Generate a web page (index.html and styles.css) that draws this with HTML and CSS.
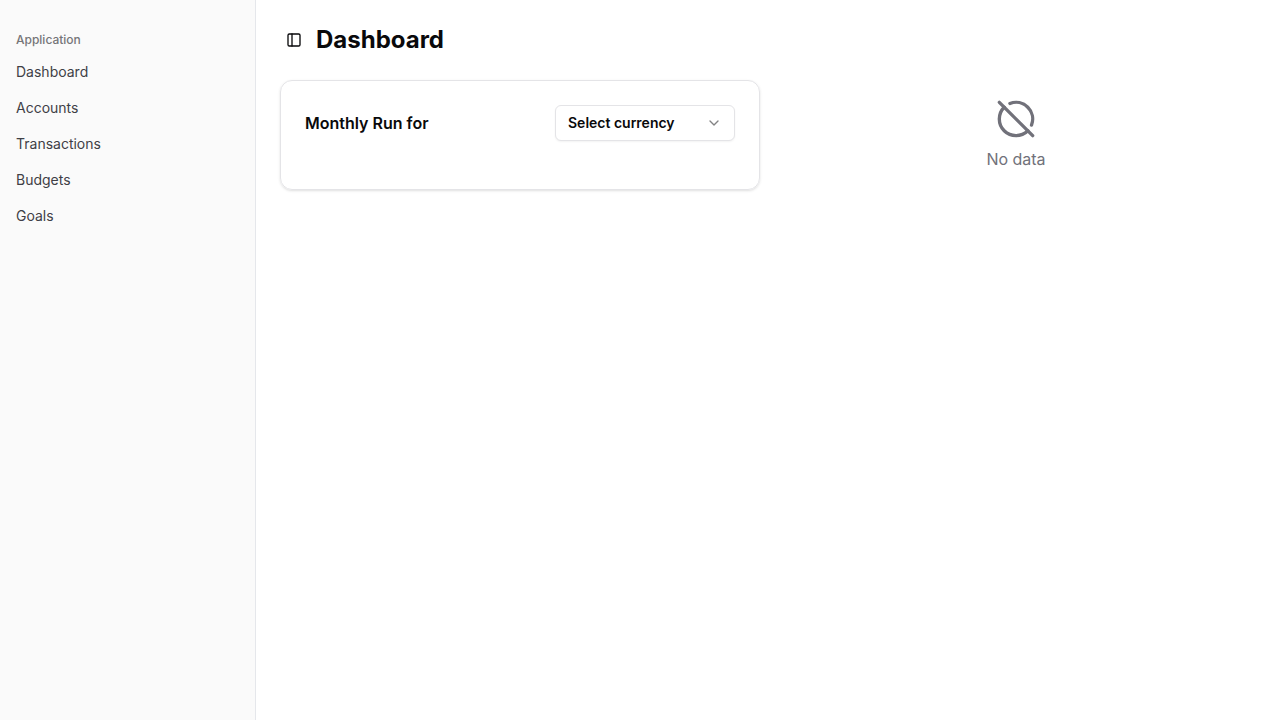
FILE: index.html
```html
<!DOCTYPE html>
<html lang="en">
<head>
<meta charset="utf-8">
<meta name="viewport" content="width=device-width, initial-scale=1">
<title>Dashboard</title>
<link rel="stylesheet" href="styles.css">
</head>
<body>
<div class="layout">
  <aside class="sidebar">
    <div class="sidebar-label" id="nav-label">Application</div>
    <nav class="nav" aria-labelledby="nav-label">
      <a class="nav-link" href="#dashboard">Dashboard</a>
      <a class="nav-link" href="#accounts">Accounts</a>
      <a class="nav-link" href="#transactions">Transactions</a>
      <a class="nav-link" href="#budgets">Budgets</a>
      <a class="nav-link" href="#goals">Goals</a>
    </nav>
  </aside>
  <main class="main">
    <header class="header">
      <button class="toggle" type="button" aria-label="Toggle sidebar">
        <svg width="16" height="16" viewBox="0 0 24 24" fill="none" stroke="currentColor" stroke-width="2" stroke-linecap="round" stroke-linejoin="round"><rect width="18" height="18" x="3" y="3" rx="2"/><path d="M9 3v18"/></svg>
      </button>
      <h1 class="title">Dashboard</h1>
    </header>
    <div class="grid">
      <section class="card">
        <label class="card-title" for="currency">Monthly Run for</label>
        <div class="select-wrap">
          <select class="select" id="currency"><option>Select currency</option></select>
          <svg class="chevron" width="16" height="16" viewBox="0 0 24 24" fill="none" stroke="currentColor" stroke-width="2" stroke-linecap="round" stroke-linejoin="round"><path d="m6 9 6 6 6-6"/></svg>
        </div>
      </section>
      <section class="empty">
        <svg width="40" height="40" viewBox="0 0 24 24" fill="none" stroke="currentColor" stroke-width="2" stroke-linecap="round" stroke-linejoin="round"><path d="m2 2 20 20"/><path d="M8.35 2.69A10 10 0 0 1 21.3 15.65"/><path d="M19.08 19.08A10 10 0 1 1 4.92 4.92"/></svg>
        <p class="empty-text">No data</p>
      </section>
    </div>
  </main>
</div>
</body>
</html>
```
FILE: styles.css
```css
* { box-sizing: border-box; }
body {
  margin: 0;
  font-family: Inter, "Liberation Sans", sans-serif;
  font-size: 16px;
  line-height: 24px;
  color: #09090b;
  background: #fff;
}
svg { display: block; flex-shrink: 0; }
.layout { display: flex; min-height: 100vh; }
.sidebar {
  flex: 0 0 256px;
  padding: 24px 8px;
  background: #fafafa;
  border-right: 1px solid #e5e7eb;
}
.sidebar-label {
  padding: 8px;
  font-size: 12px;
  font-weight: 500;
  line-height: 16px;
  color: #757578;
}
.nav { display: flex; flex-direction: column; gap: 4px; }
.nav-link {
  padding: 6px 8px;
  font-size: 14px;
  line-height: 20px;
  color: #3f3f46;
  text-decoration: none;
}
.main { flex: 1; min-width: 0; padding: 24px; }
.header { display: flex; align-items: center; gap: 8px; margin-bottom: 24px; }
.toggle {
  display: flex;
  align-items: center;
  justify-content: center;
  width: 28px;
  height: 28px;
  padding: 0;
  border: 0;
  border-radius: 6px;
  color: inherit;
  background: transparent;
}
.title { margin: 0; font-size: 24px; font-weight: 700; line-height: 32px; }
.grid { display: grid; grid-template-columns: 1fr 1fr; gap: 16px; }
.card {
  display: flex;
  align-items: center;
  justify-content: space-between;
  padding: 24px 24px 48px;
  border: 1px solid #e4e4e7;
  border-radius: 12px;
  box-shadow: 0 1px 3px rgba(0, 0, 0, 0.1), 0 1px 2px -1px rgba(0, 0, 0, 0.1);
}
.card-title { font-weight: 600; }
.select-wrap { position: relative; width: 180px; }
.select {
  display: block;
  width: 100%;
  height: 36px;
  padding: 0 36px 0 12px;
  border: 1px solid #e4e4e7;
  border-radius: 6px;
  appearance: none;
  font: 600 14px/20px Inter, "Liberation Sans", sans-serif;
  color: #09090b;
  background: #fff;
  box-shadow: 0 1px 2px rgba(0, 0, 0, 0.05);
}
.chevron {
  position: absolute;
  top: 10px;
  right: 13px;
  color: #09090b;
  opacity: 0.5;
  pointer-events: none;
}
.empty {
  display: flex;
  flex-direction: column;
  align-items: center;
  justify-content: center;
  gap: 8px;
  color: #71717a;
}
.empty-text { margin: 0; }
```
